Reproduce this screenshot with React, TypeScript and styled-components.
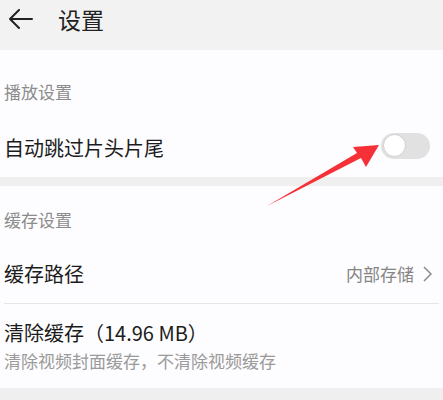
import styled, { createGlobalStyle } from "styled-components";

const GlobalStyle = createGlobalStyle`
  html, body {
    margin: 0;
    padding: 0;
    background: #efeff0;
  }
  body {
    font-family: "Noto Sans CJK SC", "Noto Sans", sans-serif;
    color: #1c1c1c;
  }
`;

const Page = styled.div`
  position: relative;
  width: 443px;
  height: 400px;
  overflow: hidden;
  background: #efeff0;
`;

const Header = styled.div`
  height: 50px;
  display: flex;
  align-items: center;
  background: #f2f2f3;
  padding: 0 0 13px 8px;
  box-sizing: border-box;
`;

const BackBtn = styled.div`
  width: 25px;
  height: 20px;
  display: flex;
  align-items: center;
  margin-right: 25px;
`;

const Title = styled.div`
  font-size: 23px;
  line-height: 28px;
  color: #222;
`;

const Card = styled.div<{ $bottom?: number }>`
  background: #fdfcfe;
  display: flex;
  flex-direction: column;
  margin-bottom: ${(p) => p.$bottom ?? 9}px;
`;

const SectionLabel = styled.div<{ $top: number; $bottom: number }>`
  font-size: 17px;
  line-height: 20px;
  color: #8c8c8c;
  padding: ${(p) => p.$top}px 4px ${(p) => p.$bottom}px;
`;

const Row = styled.div<{ $height: number }>`
  height: ${(p) => p.$height}px;
  display: flex;
  align-items: center;
  justify-content: space-between;
  padding: 0 11px 0 4px;
`;

const Label = styled.div`
  font-size: 20px;
  line-height: 24px;
`;

const Divider = styled.div`
  height: 1px;
  margin: 0 4px;
  background: #e6e6e6;
`;

const Stack = styled.div`
  display: flex;
  flex-direction: column;
  padding: 17px 4px 17px;
`;

const SubText = styled.div`
  font-size: 17px;
  line-height: 20px;
  color: #9a9a9a;
  margin-top: 6px;
`;

const Value = styled.div`
  display: flex;
  align-items: center;
  gap: 9px;
  font-size: 17px;
  line-height: 20px;
  color: #858585;
`;

const Toggle = styled.div`
  width: 49px;
  height: 26px;
  border-radius: 13px;
  background: #e1e1e2;
  display: flex;
  align-items: center;
  padding-left: 2px;
  box-sizing: border-box;
  margin-bottom: 4px;
  margin-right: 2px;
`;

const Knob = styled.div`
  width: 21px;
  height: 21px;
  border-radius: 50%;
  background: #fff;
  border: 1px solid #cfcfcf;
`;

const ArrowMark = styled.svg`
  position: absolute;
  left: 0;
  top: 0;
  pointer-events: none;
`;

export default function App() {
  return (
    <Page>
      <GlobalStyle />
      <Header>
        <BackBtn>
          <svg width="25" height="20" viewBox="0 0 25 20">
            <path
              d="M24 10H2M11 1L2 10l9 9"
              fill="none"
              stroke="#222"
              strokeWidth="2"
              strokeLinecap="round"
              strokeLinejoin="round"
            />
          </svg>
        </BackBtn>
        <Title>设置</Title>
      </Header>

      <Card>
        <SectionLabel $top={32} $bottom={16}>
          播放设置
        </SectionLabel>
        <Row $height={59}>
          <Label>自动跳过片头片尾</Label>
          <Toggle>
            <Knob />
          </Toggle>
        </Row>
      </Card>

      <Card $bottom={0}>
        <SectionLabel $top={24} $bottom={15}>
          缓存设置
        </SectionLabel>
        <Row $height={58}>
          <Label>缓存路径</Label>
          <Value>
            内部存储
            <svg width="9" height="16" viewBox="0 0 9 16">
              <path
                d="M1 1l7 7-7 7"
                fill="none"
                stroke="#8a8a8a"
                strokeWidth="1.5"
              />
            </svg>
          </Value>
        </Row>
        <Divider />
        <Stack>
          <Label>清除缓存（14.96 MB）</Label>
          <SubText>清除视频封面缓存，不清除视频缓存</SubText>
        </Stack>
      </Card>

      <ArrowMark width="443" height="400" viewBox="0 0 443 400">
        <polygon
          points="379,145 353,147 357,153 267,206 361,158 366,167"
          fill="#f53037"
        />
      </ArrowMark>
    </Page>
  );
}
